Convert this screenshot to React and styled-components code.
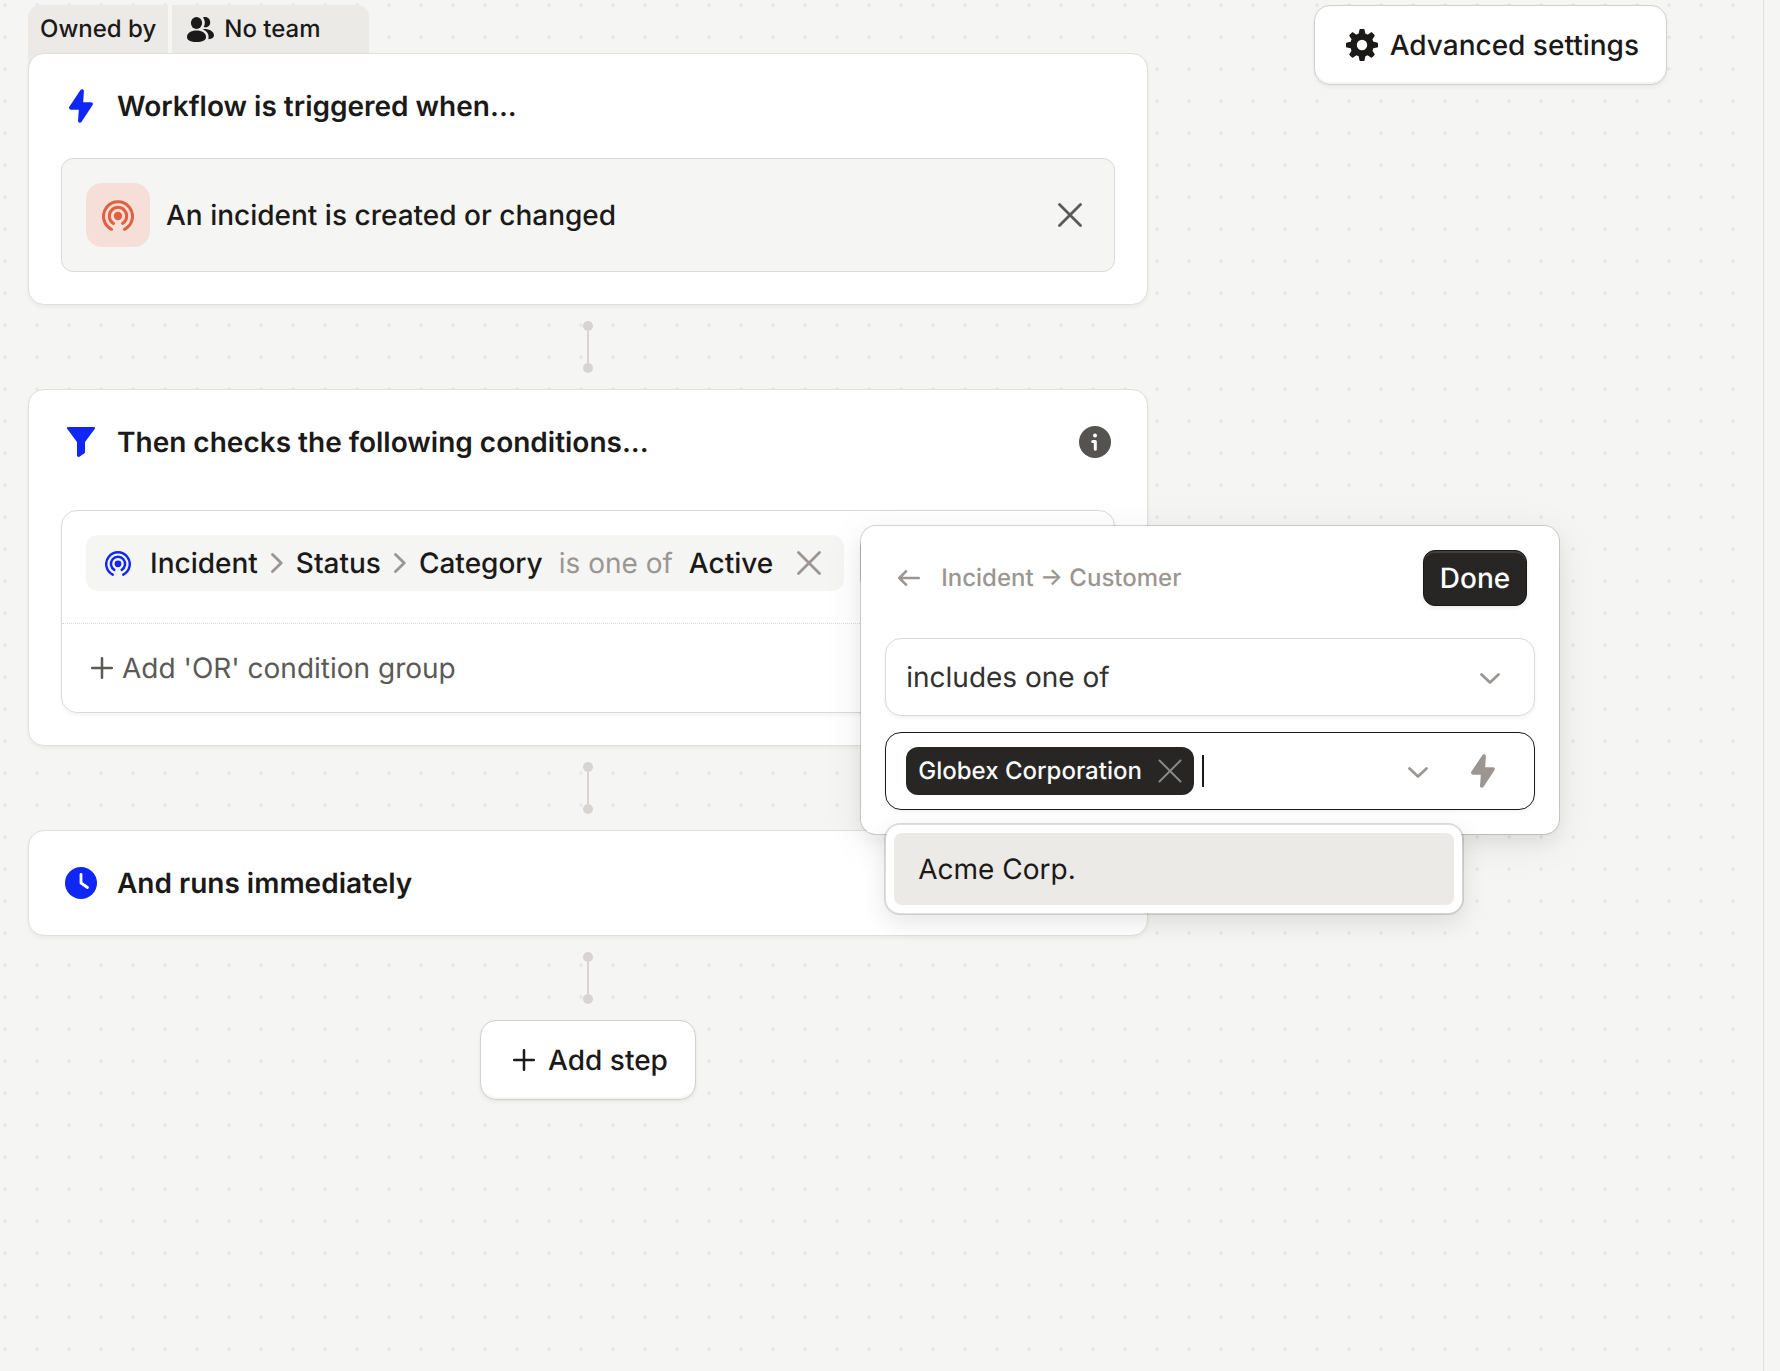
import React from "react";
import styled, { createGlobalStyle, css } from "styled-components";

const color = {
  canvas: "#f5f5f3",
  dot: "#e9e9e7",
  tab: "#ebeae6",
  line: "#e0e0de",
  ink: "#1b1a19",
  black: "#272624",
  text: "#32312f",
  muted: "#5b5a57",
  faint: "#9b9692",
  blue: "#0f26f5",
  alarm: "#e0603f",
  alarmTint: "#f6dfd9",
  connector: "#d7d4d1",
};

const GlobalStyle = createGlobalStyle`
  *, *::before, *::after { box-sizing: border-box; }
  body {
    margin: 0;
    background: ${color.canvas};
    color: ${color.ink};
    font-family: Inter, "Liberation Sans", sans-serif;
    font-size: 28px;
    line-height: 40px;
    text-rendering: geometricPrecision;
    -webkit-font-smoothing: antialiased;
  }
  button, input, select { font: inherit; color: inherit; text-rendering: inherit; }
  button { cursor: pointer; }
`;

const Page = styled.div`
  display: flex;
  min-height: 100vh;
  padding-right: 16px;
`;

const Canvas = styled.main`
  flex: 1;
  display: flex;
  align-items: flex-start;
  justify-content: space-between;
  gap: 32px;
  padding: 5px 96px 64px 28px;
  border-right: 1px solid ${color.line};
  background-image: radial-gradient(circle at center, ${color.dot} 2px, transparent 2px);
  background-size: 32px 32px;
  background-position: -11px -11px;
`;

const Workflow = styled.div`
  display: flex;
  flex-direction: column;
  flex: 0 1 1120px;
  min-width: 0;
`;

const Owner = styled.div`
  display: flex;
  gap: 4px;
  margin-bottom: -16px;
  font-size: 24px;
  font-weight: 500;
`;

const tab = css`
  display: flex;
  align-items: center;
  height: 64px;
  padding: 0 12px 16px;
  border: 0;
  background: ${color.tab};
`;

const OwnerLabel = styled.span`
  ${tab}
  border-radius: 12px 0 0 0;
`;

const OwnerButton = styled.button`
  ${tab}
  gap: 8px;
  padding-right: 48px;
  border-radius: 0 12px 0 0;
`;

const Steps = styled.div`
  display: flex;
  flex-direction: column;
  align-items: center;
  gap: 16px;
`;

const Card = styled.section`
  position: relative;
  align-self: stretch;
  border: 1px solid ${color.line};
  border-radius: 16px;
  background: #fff;
  box-shadow: 0 2px 4px rgba(0, 0, 0, 0.05);
`;

const CardHeader = styled.header`
  display: flex;
  align-items: center;
  gap: 16px;
  padding: 32px;
`;

const CardTitle = styled.h2`
  flex: 1;
  margin: 0;
  font-size: 28px;
  font-weight: 600;
`;

const CardBody = styled.div`
  padding: ${(p) => (p.$spaced ? 16 : 0)}px 32px 32px;
`;

const IconBox = styled.span`
  display: inline-flex;
  flex: none;
  align-items: center;
  justify-content: center;
  width: ${(p) => p.$size || 40}px;
  height: 40px;
  color: ${(p) => p.$color || "inherit"};
`;

const IconButton = styled.button`
  display: inline-flex;
  flex: none;
  align-items: center;
  justify-content: center;
  width: 40px;
  height: 40px;
  padding: 0;
  border: 0;
  background: none;
  color: ${(p) => p.$color || color.faint};
`;

const Trigger = styled.div`
  display: flex;
  align-items: center;
  gap: 16px;
  padding: 24px;
  border: 1px solid #d9d9d7;
  border-radius: 12px;
  background: ${color.canvas};
  font-weight: 500;
`;

const TriggerIcon = styled.span`
  display: flex;
  align-items: center;
  justify-content: center;
  width: 64px;
  height: 64px;
  border-radius: 16px;
  background: ${color.alarmTint};
  color: ${color.alarm};
`;

const TriggerName = styled.span`
  flex: 1;
`;

const Group = styled.div`
  border: 1px solid #dadad8;
  border-radius: 16px;
  box-shadow: 0 2px 4px rgba(0, 0, 0, 0.05);
`;

const GroupRow = styled.div`
  display: flex;
  gap: 16px;
  padding: 24px 24px 32px;
`;

const OrRow = styled.div`
  padding: 24px;
  border-top: 1px dotted #d9d9d7;
`;

const OrButton = styled.button`
  display: flex;
  align-items: center;
  gap: 4px;
  padding: 0;
  border: 0;
  background: none;
  color: ${color.muted};
`;

const Chip = styled.div`
  display: flex;
  align-items: center;
  gap: 16px;
  height: 56px;
  padding: 0 15px 0 12px;
  border-radius: 12px;
  background: ${color.canvas};
  font-weight: 500;
  white-space: nowrap;
`;

const Path = styled.span`
  display: flex;
  align-items: center;
`;

const PathIcon = styled(IconBox)`
  margin-right: 12px;
`;

const Operator = styled.span`
  color: ${color.faint};
  font-weight: 400;
`;

const AddAnchor = styled.div`
  position: relative;
`;

const AddCondition = styled.button`
  display: flex;
  align-items: center;
  justify-content: center;
  width: 56px;
  height: 56px;
  padding: 0;
  border: 1px solid #d0d0ce;
  border-radius: 12px;
  background: #fff;
`;

const Popover = styled.div`
  position: absolute;
  z-index: 2;
  top: -10px;
  left: 0;
  display: flex;
  flex-direction: column;
  gap: 16px;
  width: 700px;
  padding: 24px;
  border: 1px solid rgba(0, 0, 0, 0.15);
  border-radius: 16px;
  background: #fff;
  background-clip: padding-box;
  box-shadow: 0 8px 40px rgba(0, 0, 0, 0.07), 0 8px 16px rgba(0, 0, 0, 0.05);
`;

const PopoverHeader = styled.div`
  display: flex;
  align-items: center;
  justify-content: space-between;
  padding: 0 8px 0 4px;
  margin-bottom: 16px;
`;

const Crumbs = styled.div`
  display: flex;
  align-items: center;
  gap: 12px;
  color: ${color.faint};
  font-size: 24px;
  font-weight: 500;
`;

const DoneButton = styled.button`
  height: 56px;
  padding: 0 16px;
  border: 1px solid #191817;
  border-radius: 12px;
  background: ${color.black};
  box-shadow: inset 0 2px 0 #403f3e, 0 2px 4px rgba(0, 0, 0, 0.08);
  color: #fff;
  font-weight: 500;
`;

const field = css`
  width: 100%;
  height: 78px;
  border-radius: 16px;
  background: #fff;
`;

const SelectField = styled.div`
  display: grid;
  align-items: center;
  color: ${color.faint};

  & > * { grid-area: 1 / 1; }
  & > svg {
    justify-self: end;
    margin-right: 33px;
    pointer-events: none;
  }
`;

const Select = styled.select`
  ${field}
  appearance: none;
  padding: 0 72px 0 20px;
  border: 1px solid #dadad8;
  box-shadow: 0 2px 4px rgba(0, 0, 0, 0.05);
  color: ${color.text};
`;

const Combo = styled.div`
  position: relative;
`;

const ComboField = styled.div`
  ${field}
  display: flex;
  align-items: center;
  padding: 0 31px 0 20px;
  border: 1px solid ${color.ink};
  box-shadow: 0 2px 4px rgba(0, 0, 0, 0.05);
`;

const Tag = styled.span`
  display: flex;
  flex: none;
  align-items: center;
  gap: 8px;
  height: 48px;
  padding: 0 4px 0 12px;
  border-radius: 12px;
  background: ${color.black};
  color: #fafaf9;
  font-size: 24px;
  font-weight: 500;
`;

const Caret = styled.span`
  flex: none;
  width: 2px;
  height: 32px;
  margin-left: 8px;
  background: ${color.ink};
`;

const ComboInput = styled.input`
  flex: 1;
  min-width: 0;
  padding: 0;
  border: 0;
  outline: 0;
  background: none;
`;

const ComboActions = styled.span`
  display: flex;
  gap: 25px;
`;

const Options = styled.ul`
  position: absolute;
  top: 91px;
  left: -1px;
  width: 580px;
  margin: 0;
  padding: 8px;
  border: 2px solid rgba(0, 0, 0, 0.13);
  border-radius: 16px;
  background: #fff;
  background-clip: padding-box;
  box-shadow: 0 8px 24px rgba(0, 0, 0, 0.1);
  list-style: none;
`;

const Option = styled.li`
  padding: 16px 24px;
  border-radius: 8px;
  background: ${color.tab};
`;

const Connector = styled.span`
  display: flex;
  flex-direction: column;
  align-items: center;
  width: 10px;
  height: 52px;
  color: ${color.connector};

  &::before, &::after {
    content: "";
    width: 10px;
    height: 10px;
    border-radius: 50%;
    background: currentColor;
  }
`;

const ConnectorLine = styled.span`
  flex: 1;
  width: 2px;
  background: currentColor;
`;

const Button = styled.button`
  display: flex;
  flex: none;
  align-items: center;
  gap: 8px;
  height: 80px;
  padding: 0 27px;
  border: 1px solid #d0d0ce;
  border-radius: 16px;
  background: #fff;
  box-shadow: inset 0 -2px 0 #f5f5f4, 0 2px 4px rgba(0, 0, 0, 0.06);
  font-weight: 500;
  white-space: nowrap;
`;

const Svg = ({ w, h = w, box, children }) => (
  <svg width={w} height={h} viewBox={box} fill="none" aria-hidden="true">
    {children}
  </svg>
);

const stroke = { stroke: "currentColor", strokeLinecap: "round", strokeLinejoin: "round" };

const BoltIcon = () => (
  <Svg w={24} h={34} box="0 0 24 34">
    <path
      d="M11.3 1.200C12.300-.5 15 .2 14.900 2L14.200 13.300h7.800c1.500 0 2.400 1.500 1.600 2.800L12.600 32.800c-1 1.700-3.800 1-3.600-.9l.8-11.200H2c-1.600 0-2.500-1.600-1.700-2.900L11.300 1.200z"
      fill="currentColor"
    />
  </Svg>
);

const FunnelIcon = () => (
  <Svg w={28} h={30} box="0 0 28 30">
    <path
      d="M1.200 0h25.600c1.100 0 1.600 1.300.9 2.100L18 15v10.200c0 .6-.3 1-.8 1.300l-4.800 3.200c-1 .6-2.400 0-2.400-1.200V15L.3 2.100C-.4 1.300.1 0 1.200 0z"
      fill="currentColor"
    />
  </Svg>
);

const ClockIcon = () => (
  <Svg w={32} box="0 0 32 32">
    <circle cx="16" cy="16" r="16" fill="currentColor" />
    <path d="M16 7.500V16l6.500 4.500" stroke="#fff" strokeWidth="2.800" strokeLinecap="round" strokeLinejoin="round" />
  </Svg>
);

const InfoIcon = () => (
  <Svg w={32} box="0 0 32 32">
    <circle cx="16" cy="16" r="16" fill="currentColor" />
    <circle cx="16" cy="9.600" r="2" fill="#fff" />
    <path d="M13.700 15.500H16.300v7.800" stroke="#fff" strokeWidth="3" strokeLinecap="round" strokeLinejoin="round" />
  </Svg>
);

const BeaconIcon = ({ size }) => (
  <Svg w={size} box="0 0 32 32">
    <path d="M9.500 30.300a14.500 14.500 0 1 1 13 0" {...stroke} strokeWidth="3" />
    <path d="M11.500 24.500a8.700 8.700 0 1 1 9 0" {...stroke} strokeWidth="3" />
    <circle cx="16" cy="17" r="4.200" fill="currentColor" />
  </Svg>
);

const TeamIcon = () => (
  <Svg w={27} h={25} box="0 0 27 25">
    <ellipse cx="9.500" cy="6" rx="5.600" ry="6" fill="currentColor" />
    <path d="M9.500 13.500c5.500 0 9.500 2.500 9.500 6.500 0 3.200-3.500 5-9.500 5S0 23.200 0 20c0-4 4-6.500 9.500-6.500z" fill="currentColor" />
    <path d="M16 .5c4-1.500 7.200 1.400 7.200 4.900 0 3.600-3.200 5.700-6.500 4.600 1.700-2.900 1.500-6.500-.7-9.500z" fill="currentColor" />
    <path d="M15.500 12c6.200-.6 11.500 2.200 11.500 6.300 0 2.300-1.800 3.700-5.600 3.900 1-4.500-1-8-5.900-10.200z" fill="currentColor" />
  </Svg>
);

const CrossIcon = ({ weight = 2.8 }) => (
  <Svg w={24} box="0 0 24 24">
    <path d="M1.500 1.500l21 21M22.500 1.500l-21 21" {...stroke} strokeWidth={weight} />
  </Svg>
);

const PlusIcon = () => (
  <Svg w={22} box="0 0 22 22">
    <path d="M11 1.200v19.600M1.200 11h19.600" {...stroke} strokeWidth="2.500" />
  </Svg>
);

const ChevronRight = () => (
  <Svg w={12} h={20} box="0 0 12 20">
    <path d="M1.500 1.500L10.200 10l-8.700 8.500" {...stroke} strokeWidth="2.800" />
  </Svg>
);

const ChevronDown = () => (
  <Svg w={24} box="0 0 24 24">
    <path d="M3.500 9.500l8.500 8 8.500-8" {...stroke} strokeWidth="2.800" />
  </Svg>
);

const BackIcon = () => (
  <Svg w={22} h={16} box="0 0 22 16">
    <path d="M8 1.300L1.300 8 8 14.700M1.300 8H20.700" {...stroke} strokeWidth="2.600" />
  </Svg>
);

const TEETH = [0, 45, 90, 135, 180, 225, 270, 315];

const GearIcon = () => (
  <Svg w={32} box="0 0 32 32">
    <circle cx="16" cy="16" r="8.500" stroke="currentColor" strokeWidth="6.600" />
    {TEETH.map((angle) => (
      <path
        key={angle}
        d="M12.400 6l1-5C13.500.3 14 0 14.600 0h2.800c.6 0 1.100.3 1.200 1l1 5z"
        fill="currentColor"
        transform={`rotate(${angle} 16 16)`}
      />
    ))}
  </Svg>
);

const ConditionPopover = () => (
  <Popover role="dialog" aria-label="Edit condition">
    <PopoverHeader>
      <Crumbs>
        <IconButton aria-label="Back">
          <BackIcon />
        </IconButton>
        <span>Incident → Customer</span>
      </Crumbs>
      <DoneButton>Done</DoneButton>
    </PopoverHeader>
    <SelectField>
      <Select aria-label="Operator" defaultValue="includes">
        <option value="includes">includes one of</option>
      </Select>
      <ChevronDown />
    </SelectField>
    <Combo>
      <ComboField>
        <Tag>
          Globex Corporation
          <IconButton aria-label="Remove Globex Corporation" $color="#8a8885">
            <CrossIcon weight={2} />
          </IconButton>
        </Tag>
        <Caret />
        <ComboInput aria-label="Customer" />
        <ComboActions>
          <IconButton aria-label="Show options">
            <ChevronDown />
          </IconButton>
          <IconButton aria-label="Use a variable">
            <BoltIcon />
          </IconButton>
        </ComboActions>
      </ComboField>
      <Options role="listbox" aria-label="Customers">
        <Option role="option" aria-selected="false">
          Acme Corp.
        </Option>
      </Options>
    </Combo>
  </Popover>
);

const StepConnector = () => (
  <Connector>
    <ConnectorLine />
  </Connector>
);

const StepHeader = ({ icon, title, children }) => (
  <CardHeader>
    <IconBox $color={color.blue}>{icon}</IconBox>
    <CardTitle>{title}</CardTitle>
    {children}
  </CardHeader>
);

const FIELD_PATH = ["Incident", "Status", "Category"];

export default function App() {
  return (
    <>
      <GlobalStyle />
      <Page>
        <Canvas>
          <Workflow>
            <Owner>
              <OwnerLabel id="owner">Owned by</OwnerLabel>
              <OwnerButton aria-describedby="owner">
                <IconBox $size={32}>
                  <TeamIcon />
                </IconBox>
                No team
              </OwnerButton>
            </Owner>
            <Steps>
              <Card>
                <StepHeader icon={<BoltIcon />} title="Workflow is triggered when..." />
                <CardBody>
                  <Trigger>
                    <TriggerIcon>
                      <BeaconIcon size={32} />
                    </TriggerIcon>
                    <TriggerName>An incident is created or changed</TriggerName>
                    <IconButton aria-label="Remove trigger" $color={color.muted}>
                      <CrossIcon />
                    </IconButton>
                  </Trigger>
                </CardBody>
              </Card>
              <StepConnector />
              <Card>
                <StepHeader icon={<FunnelIcon />} title="Then checks the following conditions...">
                  <IconButton aria-label="About conditions" $color="#545350">
                    <InfoIcon />
                  </IconButton>
                </StepHeader>
                <CardBody $spaced>
                  <Group>
                    <GroupRow>
                      <Chip>
                        <Path>
                          <PathIcon $color={color.blue}>
                            <BeaconIcon size={26} />
                          </PathIcon>
                          {FIELD_PATH.map((part, i) => (
                            <React.Fragment key={part}>
                              {i > 0 && (
                                <IconBox $size={38} $color={color.faint}>
                                  <ChevronRight />
                                </IconBox>
                              )}
                              {part}
                            </React.Fragment>
                          ))}
                        </Path>
                        <Operator>is one of</Operator>
                        <span>Active</span>
                        <IconButton aria-label="Remove condition">
                          <CrossIcon />
                        </IconButton>
                      </Chip>
                      <AddAnchor>
                        <AddCondition aria-label="Add condition">
                          <PlusIcon />
                        </AddCondition>
                        <ConditionPopover />
                      </AddAnchor>
                    </GroupRow>
                    <OrRow>
                      <OrButton>
                        <IconBox $size={32}>
                          <PlusIcon />
                        </IconBox>
                        Add 'OR' condition group
                      </OrButton>
                    </OrRow>
                  </Group>
                </CardBody>
              </Card>
              <StepConnector />
              <Card>
                <StepHeader icon={<ClockIcon />} title="And runs immediately" />
              </Card>
              <StepConnector />
              <Button>
                <IconBox $size={32}>
                  <PlusIcon />
                </IconBox>
                Add step
              </Button>
            </Steps>
          </Workflow>
          <Button>
            <IconBox>
              <GearIcon />
            </IconBox>
            Advanced settings
          </Button>
        </Canvas>
      </Page>
    </>
  );
}
